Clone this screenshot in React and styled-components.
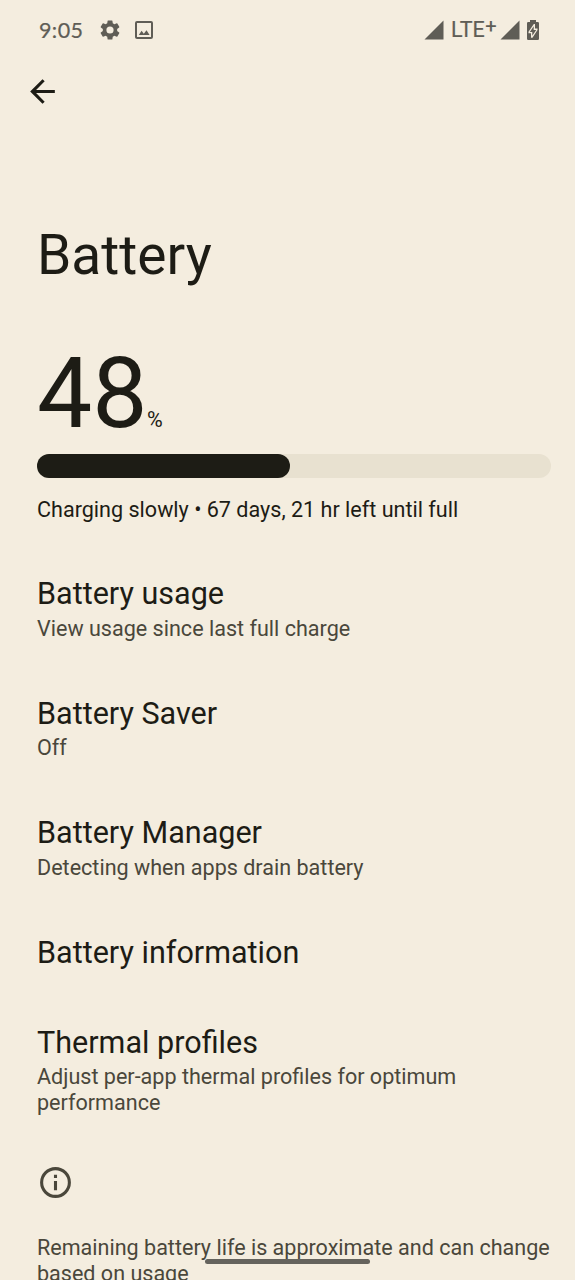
import React from 'react';
import styled, { createGlobalStyle } from 'styled-components';

const GlobalStyle = createGlobalStyle`
  html, body {
    margin: 0;
    background: #f4eddf;
  }
  * {
    box-sizing: border-box;
  }
`;

const Screen = styled.div`
  position: relative;
  width: 575px;
  height: 1280px;
  overflow: hidden;
  background: #f4eddf;
  color: #1d1c15;
  font-family: Roboto, 'Liberation Sans', sans-serif;
`;

const StatusBar = styled.header`
  display: flex;
  align-items: center;
  justify-content: space-between;
  height: 60px;
  padding: 0 32px 0 38px;
  color: #5f5d56;
  font-family: Lato, Roboto, sans-serif;
`;

const StatusGroup = styled.div`
  display: flex;
  align-items: center;
`;

const Clock = styled.span`
  width: 60px;
  padding-left: 1px;
  font-size: 21.5px;
  line-height: 24px;
  margin-top: -1px;
  letter-spacing: 0.4px;
  -webkit-text-stroke: 0.2px currentColor;
`;

const Network = styled.span`
  display: flex;
  width: 49px;
  margin: 0 0 0 7px;
  font-family: Roboto, sans-serif;
  font-size: 21.5px;
  line-height: 26px;
  -webkit-text-stroke: 0.2px currentColor;
`;

const Plus = styled.span`
  margin: -4px 0 0 0.5px;
  font-size: 20px;
`;

const Icon = styled.svg`
  display: block;
  flex: none;
  width: ${props => props.$size}px;
  height: ${props => props.$size}px;
  margin-left: ${props => props.$left || 0}px;
  fill: currentColor;
`;

const BackButton = styled.button`
  display: block;
  margin: 12.5px 0 0 24px;
  padding: 0;
  border: 0;
  background: none;
  color: #1d1c15;
`;

const Content = styled.main`
  padding: 0 24.5px 0 37px;
`;

const Heading = styled.h1`
  margin: 112.5px 0 0;
  font-size: 55.1px;
  font-weight: 400;
  line-height: 66px;
`;

const Level = styled.div`
  display: flex;
  align-items: baseline;
  height: 116px;
  margin-top: 47.5px;
  font-size: 98.3px;
  line-height: 116px;
`;

const Percent = styled.span`
  margin-left: -0.5px;
  font-size: 21.5px;
`;

const Track = styled.div`
  height: 24.5px;
  margin-top: 2px;
  border-radius: 13px;
  background: #e8e1d0;
`;

const Fill = styled.div`
  width: 253px;
  height: 100%;
  border-radius: 13px;
  background: #1d1c15;
`;

const Status = styled.p`
  margin: 18.5px 0 26.6px;
  font-size: 21.57px;
  line-height: 26px;
`;

const Item = styled.section`
  padding: 27.1px 0;
`;

const ItemTitle = styled.h2`
  margin: 0;
  font-size: 30.55px;
  font-weight: 400;
  line-height: 36px;
`;

const Summary = styled.p`
  margin: 3.7px 0 0;
  color: #4a473b;
  font-size: 21.57px;
  line-height: 25.6px;
`;

const Footer = styled.footer`
  padding-top: 21.7px;
  color: #4a473b;
`;

const FooterText = styled.p`
  margin: 34px -10px 0 0;
  font-size: 21.55px;
  line-height: 25.6px;
`;

const HomeHandle = styled.div`
  position: absolute;
  left: 205px;
  top: 1259px;
  width: 165px;
  height: 5px;
  border-radius: 3px;
  background: #65635d;
`;

const items = [
  { title: 'Battery usage', summary: 'View usage since last full charge' },
  { title: 'Battery Saver', summary: 'Off' },
  { title: 'Battery Manager', summary: 'Detecting when apps drain battery' },
  { title: 'Battery information' },
  { title: 'Thermal profiles', summary: 'Adjust per-app thermal profiles for optimum performance' },
];

const Signal = () => (
  <Icon $size={20} viewBox="0 0 20 20">
    <path d="M0.5 19.5 19.5 0.5V19.5Z" />
  </Icon>
);

const App = () => (
  <>
    <GlobalStyle />
    <Screen>
      <StatusBar>
        <StatusGroup>
          <Clock>9:05</Clock>
          <Icon $size={24} viewBox="0 0 24 24">
            <path d="M19.14 12.94c.04-.3.06-.61.06-.94s-.02-.64-.07-.94l2.03-1.58a.49.49 0 0 0 .12-.61l-1.92-3.32a.49.49 0 0 0-.59-.22l-2.39.96a7 7 0 0 0-1.62-.94l-.36-2.54a.48.48 0 0 0-.48-.41h-3.84a.48.48 0 0 0-.47.41l-.36 2.54c-.59.24-1.13.57-1.62.94l-2.39-.96a.48.48 0 0 0-.59.22L2.74 8.87a.48.48 0 0 0 .12.61l2.03 1.58c-.05.3-.09.63-.09.94s.02.64.07.94l-2.03 1.58a.49.49 0 0 0-.12.61l1.92 3.32c.12.22.37.29.59.22l2.39-.96c.5.38 1.03.7 1.62.94l.36 2.54c.05.24.24.41.48.41h3.84c.24 0 .44-.17.47-.41l.36-2.54c.59-.24 1.13-.56 1.62-.94l2.39.96c.22.08.47 0 .59-.22l1.92-3.32a.48.48 0 0 0-.12-.61zM12 15.6a3.6 3.6 0 1 1 0-7.2 3.6 3.6 0 0 1 0 7.2z" />
          </Icon>
          <Icon $size={24} $left={10} viewBox="0 0 24 24">
            <path d="M19 5v14H5V5h14m0-2H5a2 2 0 0 0-2 2v14c0 1.1.9 2 2 2h14a2 2 0 0 0 2-2V5a2 2 0 0 0-2-2z" />
            <path d="M6.8 17 9.6 12.8 11.8 15.8 14.5 12.3 17.6 17z" />
          </Icon>
        </StatusGroup>
        <StatusGroup>
          <Signal />
          <Network>LTE<Plus>+</Plus></Network>
          <Signal />
          <Icon $size={20} $left={3} viewBox="0 0 20 20">
            <path d="M7 0h6v2h1.7Q16 2 16 3.3V18.7Q16 20 14.7 20H5.3Q4 20 4 18.7V3.3Q4 2 5.3 2H7z" />
            <path fill="#f4eddf" d="M10.8 4H12V8.5H14.5V10L9.5 17.8H8V13.2H5.5V11.7z" />
            <path d="M10.7 6.2V10H13.2L9.3 15.8V12H6.8z" />
          </Icon>
        </StatusGroup>
      </StatusBar>
      <BackButton aria-label="Back">
        <Icon $size={37} viewBox="0 0 24 24">
          <path d="M20 11H7.83l5.59-5.59L12 4l-8 8 8 8 1.41-1.41L7.83 13H20v-2z" />
        </Icon>
      </BackButton>
      <Content>
        <Heading>Battery</Heading>
        <Level>48<Percent>%</Percent></Level>
        <Track><Fill /></Track>
        <Status>Charging slowly • 67 days, 21 hr left until full</Status>
        {items.map(item => (
          <Item key={item.title}>
            <ItemTitle>{item.title}</ItemTitle>
            {item.summary && <Summary>{item.summary}</Summary>}
          </Item>
        ))}
        <Footer>
          <Icon $size={37} viewBox="0 0 24 24">
            <path d="M11 7h2v2h-2zm0 4h2v6h-2zm1-9a10 10 0 1 0 0 20 10 10 0 0 0 0-20zm0 18a8 8 0 1 1 0-16 8 8 0 0 1 0 16z" />
          </Icon>
          <FooterText>Remaining battery life is approximate and can change based on usage</FooterText>
        </Footer>
      </Content>
      <HomeHandle />
    </Screen>
  </>
);

export default App;
